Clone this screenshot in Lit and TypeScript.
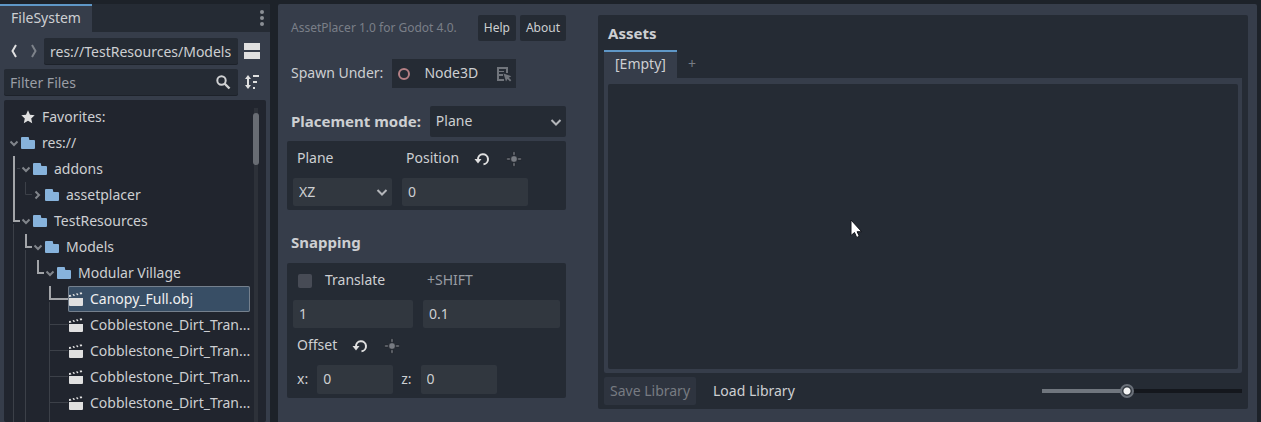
import { LitElement, html, svg, css } from "lit";
import { customElement } from "lit/decorators.js";
import { classMap } from "lit/directives/class-map.js";

const base = css`
  *, *::before, *::after { box-sizing: border-box; }
  button, input, select {
    font: inherit;
    color: inherit;
    margin: 0;
    border: 0;
    background: none;
    border-radius: 2px;
    appearance: none;
    min-width: 0;
    outline-offset: -1px;
  }
  svg { display: block; flex: none; }
  .icon-button { padding: 0; display: grid; place-items: center; width: 16px; height: 16px; flex: none; }
`;

interface Row {
  name: string;
  level: number;
  kind: "star" | "folder" | "mesh";
  open?: boolean;
  selected?: boolean;
  bright?: string;
  dim?: string;
}

const mesh = (name: string): Row => ({
  name, level: 4, kind: "mesh", dim: "M9.5 0V26M21.5 0V26M45.5 0V26M46 12.5H64",
});

const rows: Row[] = [
  { name: "Favorites:", level: 0, kind: "star" },
  { name: "res://", level: 0, kind: "folder", open: true },
  { name: "addons", level: 1, kind: "folder", open: true, bright: "M10 0V26", dim: "M13 12.5H16" },
  { name: "assetplacer", level: 2, kind: "folder", open: false, bright: "M10 0V26", dim: "M21.5 0V12.5H28" },
  { name: "TestResources", level: 1, kind: "folder", open: true, bright: "M10 0V13H16", dim: "M9.5 16V26" },
  { name: "Models", level: 2, kind: "folder", open: true, bright: "M22 0V13H28", dim: "M9.5 0V26M21.5 16V26" },
  { name: "Modular Village", level: 3, kind: "folder", open: true, bright: "M34 0V13H40", dim: "M9.5 0V26M21.5 0V26" },
  { name: "Canopy_Full.obj", level: 4, kind: "mesh", selected: true, bright: "M46 0V13H64", dim: "M9.5 0V26M21.5 0V26M45.5 16V26" },
  mesh("Cobblestone_Dirt_Tran..."),
  mesh("Cobblestone_Dirt_Tran..."),
  mesh("Cobblestone_Dirt_Tran..."),
  mesh("Cobblestone_Dirt_Tran..."),
];

const glyphs = {
  star: svg`<path fill="#e0e0e0" d="M8 1.3 10 5.7l4.7.5-3.5 3.2 1 4.8L8 11.8l-4.2 2.4 1-4.8L1.300 6.200 6 5.700z"/>`,
  folder: svg`<path fill="#87b3dc" d="M2 2a1 1 0 0 0-1 1v10a1 1 0 0 0 1 1h12a1 1 0 0 0 1-1V6a1 1 0 0 0-1-1h-4a1 1 0 0 1-1-1V3a1 1 0 0 0-1-1z"/>`,
  mesh: svg`<path fill="#e0e0e0" d="M1 7h14v7a1 1 0 0 1-1 1H2a1 1 0 0 1-1-1zM1 4l1.500-.3 1 1.700-2.500.6zM4.500 3.200 6 2.900l1 1.800-1.500.3zM8 2.500l1.500-.3 1 1.700-1.500.4zM11.500 1.700l2-.5.8 1.800-1.800.4z"/>`,
};

@customElement("file-dock")
class FileDock extends LitElement {
  static styles = [base, css`
    :host { display: flex; flex-direction: column; width: 270px; flex: none; background: #363d4a; overflow: hidden; border-radius: 0 2px 0 0; }
    .tabs { display: flex; justify-content: space-between; align-items: center; background: #252b34; height: 28px; flex: none; }
    .tab { height: 28px; padding: 0 11px 2px; background: #363d4a; border-top: 2px solid #5f97c7; border-radius: 0; }
    .more { height: 24px; }
    .body { display: flex; flex-direction: column; gap: 5px; padding: 6px 4px 0; flex: 1; min-height: 0; }
    .bar { display: flex; align-items: center; padding-right: 6px; gap: 6px; height: 26px; flex: none; }
    .field { display: flex; align-items: center; flex: 1; min-width: 0; height: 26px; background: #252b34; box-shadow: 0 1px #1d222a; border-radius: 2px; padding: 0 7px 0 6px; }
    .field input { flex: 1; padding: 0; height: 26px; }
    .field input::placeholder { color: #9a9ea5; opacity: 1; }
    .history { display: flex; gap: 4px; padding-left: 2px; margin-right: -4px; }
    .tree { display: flex; flex: 1; min-height: 0; background: #21252e; border-radius: 2px; padding: 4px 8px 0 0; overflow: hidden; }
    .items { list-style: none; margin: 0; padding: 0; flex: 1; min-width: 0; }
    .row { display: flex; height: 26px; align-items: center; }
    .cell { display: flex; flex: 1; min-width: 0; height: 26px; align-items: center; gap: 6px; white-space: nowrap; border-radius: 2px; }
    .selected { background: #384e65; box-shadow: inset 0 0 0 1px #75808d; color: #f0f0f0; }
    .track { width: 4px; margin: 4px 0 0 4px; background: #2d3139; flex: none; }
    .thumb { width: 6px; height: 52px; margin: 5px 0 0 -1px; border-radius: 3px; background: #686c73; }
  `];

  row(r: Row) {
    const indent = r.level * 12 + 16;
    const a = r.level * 12 + 10;
    return html`<li class="row" role="treeitem" aria-level=${r.level + 1}>
      <svg width=${indent} height="26" fill="none">
        <path d=${r.dim ?? ""} stroke="#3c4048"/>
        <path d=${r.bright ?? ""} stroke="#a3a5a9" stroke-width="2"/>
        ${r.open === undefined ? "" : svg`<path stroke="#81858b" stroke-width="2" d=${r.open ? `M${a - 3.5} 11.500l3.500 3.500 3.500-3.500` : `M${a - 2.5} 9.500l3.500 3.500-3.500 3.500`}/>`}
      </svg>
      <span class=${classMap({ cell: true, selected: !!r.selected })}>
        <svg width="16" height="16">${glyphs[r.kind]}</svg>${r.name}
      </span>
    </li>`;
  }

  render() {
    return html`
      <div class="tabs" role="tablist">
        <button class="tab" role="tab" aria-selected="true">FileSystem</button>
        <button class="icon-button more" aria-label="Dock options">
          <svg width="16" height="20" fill="#8b8f95"><circle cx="8" cy="4" r="2"/><circle cx="8" cy="10" r="2"/><circle cx="8" cy="16" r="2"/></svg>
        </button>
      </div>
      <div class="body">
        <div class="bar">
          <div class="history">
            <button class="icon-button" aria-label="Previous folder"><svg width="16" height="16" fill="none" stroke="#e0e0e0" stroke-width="2"><path d="M10 2 6.500 8l3.500 6"/></svg></button>
            <button class="icon-button" aria-label="Next folder"><svg width="16" height="16" fill="none" stroke="#7d828a" stroke-width="2"><path d="M6 2 9.500 8 6 14"/></svg></button>
          </div>
          <div class="field"><input aria-label="Current path" .value=${"res://TestResources/Models"} /></div>
          <button class="icon-button" aria-label="Toggle split mode"><svg width="16" height="16" fill="#e0e0e0"><path d="M0 0h16v7H0zM0 9h16v7H0z"/></svg></button>
        </div>
        <div class="bar">
          <div class="field">
            <input aria-label="Filter files" placeholder="Filter Files" />
            <svg width="16" height="16" fill="none" stroke="#d0d1d3" stroke-width="2"><circle cx="6.500" cy="6.500" r="4.200"/><path d="m9.500 9.500 5 5" stroke-width="2.400"/></svg>
          </div>
          <button class="icon-button" aria-label="Sort files"><svg width="16" height="16" fill="#e0e0e0"><path d="M4 1 7 5H5v6h2l-3 4-3-4h2V5H1zM9 1h6v2H9zM9 7h4v2H9zM9 13h2v2H9z"/></svg></button>
        </div>
        <div class="tree">
          <ul class="items" role="tree">
            ${rows.map((r) => this.row(r))}
            <li class="row" role="presentation"><svg width="64" height="26" fill="none" stroke="#3c4048"><path d="M9.500 0V26M21.500 0V26M45.500 0V26"/></svg></li>
          </ul>
          <div class="track"><div class="thumb"></div></div>
        </div>
      </div>`;
  }
}

const reload = html`<button class="icon-button" aria-label="Reset"><svg width="16" height="16"><path d="M4 8.500A5 5 0 1 1 9.500 13.200" fill="none" stroke="#e0e0e0" stroke-width="2"/><path d="M.5 8h7L4 12.500z" fill="#e0e0e0"/></svg></button>`;
const target = html`<button class="icon-button" aria-label="Pick position"><svg width="16" height="16" fill="#777b82" stroke="#1c2027" stroke-width=".6"><circle cx="8" cy="8" r="3.300"/><path d="M7 .7h2v3.600H7zM7 11.700h2v3.600H7zM.7 7h3.600v2H.7zM11.700 7h3.600v2h-3.600z"/></svg></button>`;
const chevron = svg`<path d="m3.500 6 4.500 4.500L12.500 6" fill="none" stroke="#b4b6ba" stroke-width="2"/>`;

@customElement("placer-options")
class PlacerOptions extends LitElement {
  static styles = [base, css`
    :host { display: flex; flex-direction: column; width: 279px; flex: none; }
    .line { display: flex; align-items: center; }
    .text { padding-bottom: 2px; }
    .top { gap: 4px; padding-left: 4px; height: 26px; font-size: 12px; }
    .version { flex: 1; color: #7a7f88; white-space: nowrap; }
    .top button { height: 26px; padding: 0 6px; background: #252b34; }
    .spawn { margin-top: 18px; padding-left: 4px; gap: 9px; }
    .node { display: flex; align-items: center; width: 124px; height: 29px; padding: 0 4px; background: #252b34; border-radius: 0; }
    .node .text { flex: 1; padding-left: 12px; text-align: left; }
    .mode { margin-top: 18px; padding-left: 4px; gap: 9px; }
    .bold { font-weight: 700; font-size: 15px; margin: 0; line-height: 20px; }
    .select { display: grid; grid-template-columns: 1fr 18px; align-items: center; background: #252b34; border-radius: 2px; flex: 1; }
    .select select { grid-area: 1 / 1 / 2 / 3; height: 31px; padding: 0 6px 2px; }
    .select svg { grid-area: 1 / 2; pointer-events: none; }
    .panel { background: #252b34; border-radius: 2px; padding: 4px 6px; }
    .plane { margin-top: 4px; display: grid; grid-template-columns: 99px 126px; column-gap: 10px; }
    .caption { display: flex; align-items: center; height: 33px; padding: 0 0 6px 4px; }
    .num { background: #31373f; height: 28px; padding: 0 6px 2px; width: 100%; }
    .plane .select { background: #31373f; }
    .plane select { height: 28px; padding-bottom: 0; }
    .title { margin: 22px 0 11px 4px; }
    .snap { display: grid; grid-template-columns: 120px 137px; column-gap: 10px; }
    .snap .caption { gap: 13px; }
    .snap .faded { color: #989ca3; }
    .check { width: 14px; height: 14px; background: #474b55; border-radius: 2px; margin-left: 1px; }
    .icons { display: flex; gap: 16px; padding-left: 15px; }
    .snap .offset { grid-column: 1 / 3; height: 37px; padding-bottom: 2px; gap: 0; }
    .axes { grid-column: 1 / 3; display: flex; align-items: center; gap: 8px; }
    .axes label { display: flex; align-items: center; gap: 9px; padding-left: 4px; }
    .axes label + label { padding-left: 0; }
    .axes .num { width: 76px; height: 29px; }
  `];

  render() {
    return html`
      <div class="line top">
        <span class="version">AssetPlacer 1.0 for Godot 4.0.</span>
        <button>Help</button><button>About</button>
      </div>
      <div class="line spawn">
        <span class="text" id="spawn">Spawn Under:</span>
        <button class="node" aria-labelledby="spawn">
          <svg width="16" height="16" fill="none" stroke="#b47f84" stroke-width="2"><circle cx="8" cy="8" r="5"/></svg>
          <span class="text">Node3D</span>
          <svg width="16" height="16" fill="#71757c"><path d="M1 1h11v6h-2V3H3v2h5v1H3v2h4v2H3v3h5v2H1z"/><path d="m7.500 7.500 2.500 8 1.500-2.500 2.500 2.500 1.300-1.300-2.500-2.500 2.500-1.500z"/></svg>
        </button>
      </div>
      <div class="line mode">
        <label class="bold text" for="mode">Placement mode:</label>
        <span class="select"><select id="mode"><option>Plane</option></select><svg width="16" height="16">${chevron}</svg></span>
      </div>
      <div class="panel plane">
        <label class="caption" for="plane"><span class="text">Plane</span></label>
        <div class="caption"><label class="text" for="position">Position</label><span class="icons">${reload}${target}</span></div>
        <span class="select"><select id="plane"><option>XZ</option></select><svg width="16" height="16">${chevron}</svg></span>
        <input class="num" id="position" .value=${"0"} />
      </div>
      <h2 class="bold title">Snapping</h2>
      <div class="panel snap">
        <label class="caption"><input class="check" type="checkbox" /><span class="text">Translate</span></label>
        <label class="caption faded" for="shift"><span class="text">+SHIFT</span></label>
        <input class="num" aria-label="Translate step" .value=${"1"} />
        <input class="num" id="shift" .value=${"0.1"} />
        <div class="caption offset"><span class="text">Offset</span><span class="icons">${reload}${target}</span></div>
        <div class="axes">
          <label><span class="text">x:</span><input class="num" .value=${"0"} /></label>
          <label><span class="text">z:</span><input class="num" .value=${"0"} /></label>
        </div>
      </div>`;
  }
}

@customElement("asset-library")
class AssetLibrary extends LitElement {
  static styles = [base, css`
    :host { display: flex; flex-direction: column; flex: 1; min-width: 0; background: #252b34; border-radius: 2px; padding: 8px 6px 4px; }
    .heading { margin: 0 4px; font-size: 15px; line-height: 20px; font-weight: 700; }
    .tabs { display: flex; align-items: center; margin-top: 7px; }
    .tab { height: 28px; padding: 0 11px 2px; background: #363d4a; border-top: 2px solid #5f97c7; border-radius: 0; }
    .add { height: 28px; padding: 0 11px; color: #777c84; }
    .frame { flex: 1; padding: 6px 4px 4px; background: #363d4a; display: flex; border-radius: 0 0 2px 2px; }
    .canvas { flex: 1; background: #252b34; border-radius: 2px; position: relative; }
    .pointer { position: absolute; left: 242px; top: 135px; }
    .footer { display: flex; align-items: center; margin-top: 4px; gap: 11px; }
    .footer button { height: 28px; padding: 0 6px; }
    .footer button:disabled { background: #2e343f; color: #777b82; }
    .zoom { width: 200px; height: 16px; margin-left: auto; background: linear-gradient(90deg, #70767e 43%, #14171d 43%) center / 100% 4px no-repeat; }
    .zoom::-webkit-slider-thumb {
      appearance: none; width: 14px; height: 14px; border-radius: 50%; border: 2px solid #6a7079;
      background: radial-gradient(circle, #f4f4f4 3px, #343a42 4px);
    }
  `];

  render() {
    return html`
      <h2 class="heading">Assets</h2>
      <div class="tabs" role="tablist">
        <button class="tab" role="tab" aria-selected="true">[Empty]</button>
        <button class="add" role="tab" aria-selected="false">+</button>
      </div>
      <div class="frame"><div class="canvas">
        <svg class="pointer" width="14" height="20"><path d="M1 1v15.500l3.500-3L6.700 18.500l2.600-1.200-2.200-4.600h4.600z" fill="#fff" stroke="#10131a"/></svg>
      </div></div>
      <div class="footer">
        <button disabled>Save Library</button>
        <button>Load Library</button>
        <input class="zoom" type="range" min="0" max="100" value="42" aria-label="Preview size" />
      </div>`;
  }
}

@customElement("app-root")
class AppRoot extends LitElement {
  static styles = [base, css`
    :host {
      display: flex; gap: 8px; height: 100vh; padding: 4px 4px 0 0; box-sizing: border-box; overflow: hidden;
      background: #1d2229; color: #cdcfd2; font: 14px/20px "Noto Sans", sans-serif;
    }
    .main { display: flex; flex: 1; min-width: 0; gap: 32px; padding: 11px 9px 13px; background: #363d4a; border-radius: 2px 2px 0 0; }
  `];

  render() {
    return html`
      <file-dock></file-dock>
      <main class="main"><placer-options></placer-options><asset-library></asset-library></main>`;
  }
}
